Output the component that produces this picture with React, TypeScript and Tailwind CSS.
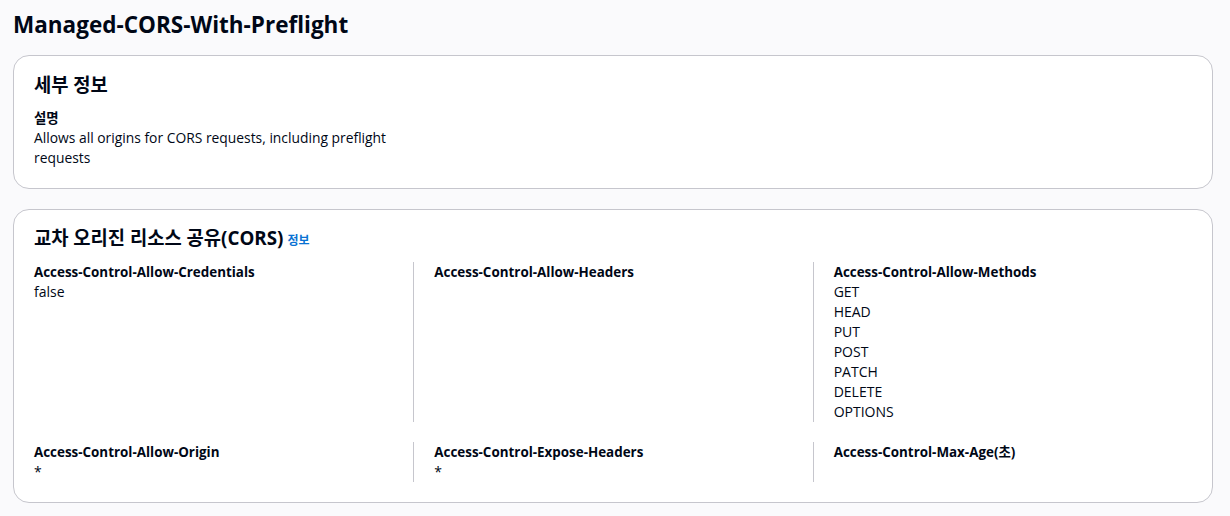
import React from "react";

const font = {
  fontFamily: '"Open Sans", "Noto Sans CJK KR", sans-serif',
};

type Field = { label: string; values: string[] };

const rowOne: Field[] = [
  { label: "Access-Control-Allow-Credentials", values: ["false"] },
  { label: "Access-Control-Allow-Headers", values: [] },
  {
    label: "Access-Control-Allow-Methods",
    values: ["GET", "HEAD", "PUT", "POST", "PATCH", "DELETE", "OPTIONS"],
  },
];

const rowTwo: Field[] = [
  { label: "Access-Control-Allow-Origin", values: ["*"] },
  { label: "Access-Control-Expose-Headers", values: ["*"] },
  { label: "Access-Control-Max-Age(초)", values: [] },
];

function Cell({ field, idx }: { field: Field; idx: number }) {
  return (
    <div
      className={`pl-5 min-h-10 ${idx === 0 ? "" : "border-l border-[#c6c6cd]"}`}
    >
      <div className="text-[13.4px] leading-5 font-bold">{field.label}</div>
      {field.values.map((v) => (
        <div key={v} className="text-[14px] leading-5">
          {v}
        </div>
      ))}
    </div>
  );
}

export default function App() {
  return (
    <div
      className="min-h-[516px] bg-[#fafafc] text-[#000716] pt-[10px] pl-[13px] pr-[17px]"
      style={font}
    >
      <h1 className="text-[22.5px] leading-[30px] font-bold mb-[15px]">
        Managed-CORS-With-Preflight
      </h1>

      <div className="bg-white border border-[#c6c6cd] rounded-2xl px-5 pt-[18px] pb-5">
        <h2 className="text-[18.75px] leading-[22px] font-bold mb-3">세부 정보</h2>
        <div className="w-[360px]">
          <div className="text-[13.4px] leading-5 font-bold">설명</div>
          <div className="text-[13.85px] leading-5">
            Allows all origins for CORS requests, including preflight requests
          </div>
        </div>
      </div>

      <div className="mt-5 bg-white border border-[#c6c6cd] rounded-2xl px-5 pt-[17px] pb-5">
        <h2 className="text-[18.75px] leading-[22px] font-bold mb-[10px] flex items-baseline gap-1">
          교차 오리진 리소스 공유(CORS)
          <span className="text-[12px] text-[#0972d3] font-bold">정보</span>
        </h2>
        <div className="-ml-5 grid grid-cols-3 gap-x-5 gap-y-5">
          {rowOne.map((f, i) => (
            <Cell key={f.label} field={f} idx={i} />
          ))}
          {rowTwo.map((f, i) => (
            <Cell key={f.label} field={f} idx={i} />
          ))}
        </div>
      </div>
    </div>
  );
}
